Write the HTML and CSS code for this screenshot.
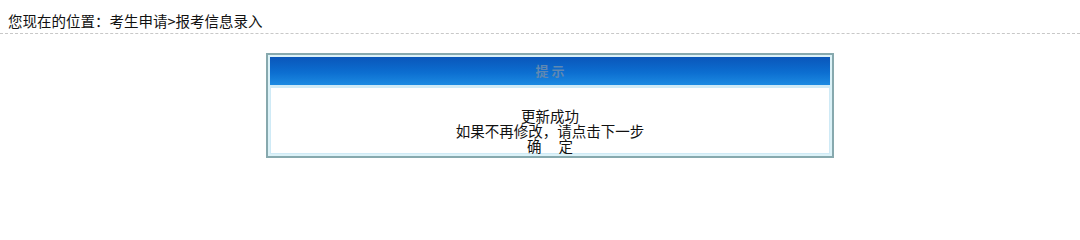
FILE: index.html
```html
<!DOCTYPE html>
<html lang="zh-CN">
<head>
<meta charset="utf-8">
<title>报考信息录入</title>
<link rel="stylesheet" href="styles.css">
</head>
<body>
<div class="crumb">您现在的位置：考生申请&gt;报考信息录入</div>
<div class="box">
  <div class="box-head">提 示</div>
  <div class="box-body">
    <div>更新成功</div>
    <div>如果不再修改，请点击下一步</div>
    <div class="ok">确 定</div>
  </div>
</div>
</body>
</html>
```

FILE: styles.css
```css
html, body {
  margin: 0;
  padding: 0;
  background: #ffffff;
}
body {
  font-family: "Noto Sans CJK SC", "Liberation Sans", sans-serif;
  color: #111111;
}
.crumb {
  padding: 8px 0 0 8px;
  height: 25px;
  line-height: 25px;
  font-size: 14.5px;
  border-bottom: 1px dashed #c8c8c8;
}
.box {
  margin: 19px 0 0 266px;
  width: 560px;
  border: 2px solid #87a9ae;
  background: #dcf2f8;
  padding: 2px;
}
.box-head {
  height: 28px;
  line-height: 28px;
  text-align: center;
  font-size: 13px;
  font-weight: bold;
  color: #5f88b2;
  background: linear-gradient(#0a56ba, #0c6ed0 55%, #1c8ae2);
  border-bottom: 2px solid #cfeaf6;
}
.box-body {
  background: #ffffff;
  border: 1px solid #cfeaf6;
  padding: 20px 0 0;
  text-align: center;
  font-size: 14.5px;
  line-height: 15px;
}
.ok {
  word-spacing: 14px;
}
```
